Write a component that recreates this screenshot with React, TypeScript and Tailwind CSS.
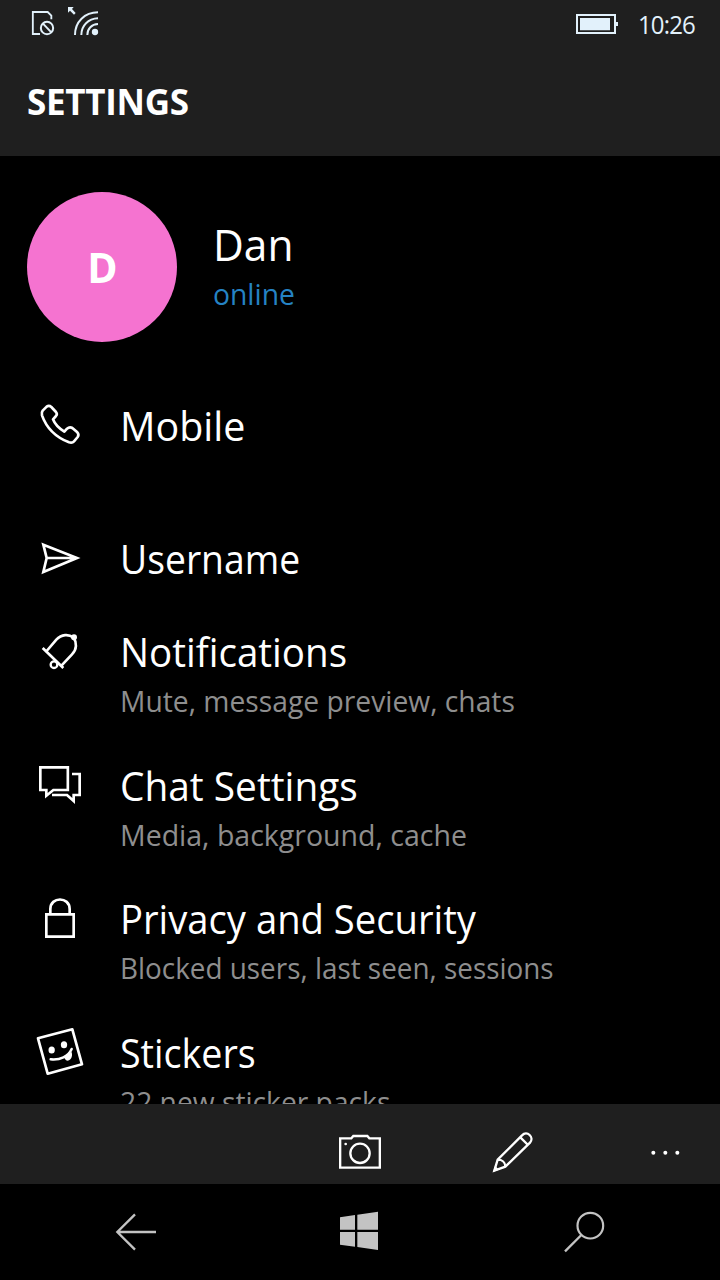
import type { ReactNode } from "react";

function Glyph({ box, className, children }: { box: string; className: string; children: ReactNode }) {
  return (
    <svg viewBox={box} className={className} fill="none" stroke="currentColor" strokeWidth={8}>
      {children}
    </svg>
  );
}

const rowIcon = "ml-5 mr-5 h-[54px] w-20 shrink-0";

const phone = (
  <Glyph box="0 21 240 162" className={rowIcon}>
    <path
      strokeLinejoin="round"
      d="M68 62 L80 50 Q87 45 94 51 L108 66 Q113 72 108 78 L99 88 Q107 109 133 125 L141 116 Q149 109 157 114 L172 127 Q178 134 173 141 L162 154 Q157 160 147 157 Q86 133 66 76 Q64 67 68 62 Z"
    />
  </Glyph>
);
const send = (
  <Glyph box="0 420 240 162" className={rowIcon}>
    <path d="M70 464 L171 504 L70 546 L80 504 Z M80 504 H168" />
  </Glyph>
);
const bell = (
  <Glyph box="0 9 240 162" className={rowIcon}>
    <path d="M68 84 L130 144 M80 93 L109 59 C125 42 146 42 160 52 C171 68 171 88 156 103 L125 136" />
    <circle cx="162" cy="52" r="9" fill="currentColor" stroke="none" />
    <circle cx="102" cy="134" r="10" strokeWidth={7} />
  </Glyph>
);
const chats = (
  <Glyph box="0 411 240 162" className={rowIcon}>
    <path d="M61 442 H143.500 V510 H100 L79 527 V510 H61 Z M156 462 H179 V525 H161 V543 L141 525 H96" />
  </Glyph>
);
const lock = (
  <Glyph box="0 30 240 162" className={rowIcon}>
    <path d="M79 103 H161 V170 H79 Z M91 103 V87 C91 49 149 49 149 87 V103" />
  </Glyph>
);
const sticker = (
  <Glyph box="0 432 240 162" className={rowIcon}>
    <path strokeLinejoin="round" d="M54 475 L157 448 L186 553 L83 581 Z" />
    <g fill="currentColor" stroke="none">
      <ellipse cx="95" cy="510" rx="9.500" ry="10.500" />
      <ellipse cx="132" cy="494" rx="9.500" ry="10.500" />
      <path d="M132 529 L155 516 C159 532 151 542 142 542 C137 542 133 536 132 529 Z" />
    </g>
    <path strokeLinecap="round" d="M92 538 C120 541 145 530 155 507" strokeWidth={7.5} />
  </Glyph>
);

type RowProps = { icon: ReactNode; title: string; note?: string; height: string; fit: string; noteFit?: string };

const rows: RowProps[] = [
  { icon: phone, title: "Mobile", height: "h-[133px]", fit: "scale-x-[0.985]" },
  { icon: send, title: "Username", height: "h-[93px]", fit: "scale-x-[0.932]" },
  { icon: bell, title: "Notifications", note: "Mute, message preview, chats", height: "h-[134px]", fit: "scale-x-[0.964]", noteFit: "scale-x-[0.974]" },
  { icon: chats, title: "Chat Settings", note: "Media, background, cache", height: "h-[133px]", fit: "scale-x-[0.971]", noteFit: "scale-x-[0.983]" },
  { icon: lock, title: "Privacy and Security", note: "Blocked users, last seen, sessions", height: "h-[134px]", fit: "scale-x-[0.955]", noteFit: "scale-x-[0.961]" },
  { icon: sticker, title: "Stickers", note: "22 new sticker packs", height: "h-[133px]", fit: "scale-x-[0.94]", noteFit: "scale-x-[0.973]" },
];

function SettingsRow({ icon, title, note, height, fit, noteFit }: RowProps) {
  return (
    <li className={`flex shrink-0 items-start ${height}`}>
      {icon}
      <div className="whitespace-nowrap">
        <div className={`origin-left text-[40px] leading-[58px] ${fit}`}>{title}</div>
        {note && <div className={`origin-left text-[29px] leading-[40px] text-[#8e8e8e] ${noteFit}`}>{note}</div>}
      </div>
    </li>
  );
}

export default function App() {
  return (
    <div className="flex h-[1280px] w-[720px] flex-col overflow-hidden bg-black font-['Open_Sans','Noto_Sans',sans-serif] text-white">
      <header className="h-[156px] shrink-0 bg-[#1f1f1f]">
        <div className="flex h-[50px] items-center text-[#e2f1fb]">
          <Glyph box="0 0 240 150" className="ml-5 h-[50px] w-20">
            <path d="M60 102 H38.500 V36 H83 L94 47 V58" strokeWidth={5.5} />
            <circle cx="81" cy="84" r="18.500" strokeWidth={6} />
            <path d="M69 71 L94 97" strokeWidth={6} />
            <path d="M165 105 C165 65 194 37 234 37 M184 105 C184 76 205 56 234 55 M202 105 C202 86 215 73 234 72" strokeWidth={6} />
            <circle cx="225" cy="96" r="9.500" fill="currentColor" stroke="none" />
            <path d="M144 21 H161 L156 27 L167 39 L162 44 L150 32 L144 38 Z" fill="currentColor" stroke="none" />
          </Glyph>
          <Glyph box="0 0 135 150" className="ml-[473px] h-[50px] w-[45px]">
            <path d="M12 45 H126 V99 H12 Z" strokeWidth={6} />
            <path d="M21 54 H111 V91 H21 Z M129 66 H135 V78 H129 Z" fill="currentColor" stroke="none" />
          </Glyph>
          <span className="ml-5 origin-left scale-x-[0.96] pb-[3px] text-[25px] leading-[46px] tracking-[-0.9px]">10:26</span>
        </div>
        <h1 className="pl-[27px] text-[35px] leading-[104px] font-bold tracking-[-0.3px]">SETTINGS</h1>
      </header>

      <main className="flex min-h-0 flex-1 flex-col overflow-hidden">
        <section className="flex h-[241px] shrink-0 pt-9 pl-[27px]">
          <div className="flex size-[150px] items-center justify-center rounded-full bg-[#f573d0] pt-px pl-px text-[41px] font-bold">D</div>
          <div className="ml-9 pt-[23px]">
            <div className="origin-left scale-x-[0.965] text-[44px] leading-[58px]">Dan</div>
            <div className="origin-left scale-x-[0.975] text-[29px] leading-[42px] text-[#2583c4]">online</div>
          </div>
        </section>
        <ul className="flex flex-col">
          {rows.map((row) => (
            <SettingsRow key={row.title} {...row} />
          ))}
        </ul>
      </main>

      <div className="flex h-20 shrink-0 bg-[#1f1f1f] pl-80">
        <Glyph box="0 27 240 240" className="size-20">
          <path d="M60.500 130 H94 L100 123 H142 L148 130 H179.500 V218 H60.500 Z" strokeWidth={7} />
          <circle cx="120" cy="175" r="29" strokeWidth={7} />
          <circle cx="77" cy="147" r="4" fill="currentColor" stroke="none" />
        </Glyph>
        <Glyph box="460 27 240 240" className="ml-[73px] size-20">
          <path d="M524 227 L534 194 L607 121 C622 105 645 127 631 143 L557 215 Z M534 194 C547 194 557 202 557 215 M602 127 L625 150" strokeWidth={7} />
          <path d="M520 231 L526 212 L538 224 Z" fill="currentColor" stroke="none" />
        </Glyph>
        <Glyph box="915 27 240 240" className="ml-[72px] size-20">
          <g fill="currentColor" stroke="none">
            <circle cx="1000" cy="173" r="6" />
            <circle cx="1036" cy="173" r="6" />
            <circle cx="1072" cy="173" r="6" />
          </g>
        </Glyph>
      </div>

      <nav className="flex h-24 shrink-0 text-[#c3c3c3]">
        <Glyph box="0 -18 360 288" className="ml-[90px] h-24 w-[120px]">
          <path d="M135 73 L82 126 L135 179 M82 126 H198" strokeWidth={7} />
        </Glyph>
        <Glyph box="0 267 240 288" className="ml-[110px] h-24 w-20">
          <path d="M60 367 L105 360 V404 H60 Z M112 359 L174 350 V404 H112 Z M60 411 H105 V455 L60 449 Z M112 411 H174 V465 L112 456 Z" fill="currentColor" stroke="none" />
        </Glyph>
        <Glyph box="660 267 300 288" className="ml-[140px] h-24 w-[100px]">
          <circle cx="811" cy="392" r="38.500" strokeWidth={6.5} />
          <path d="M784 420 L735 469" strokeWidth={7} />
        </Glyph>
      </nav>
    </div>
  );
}
